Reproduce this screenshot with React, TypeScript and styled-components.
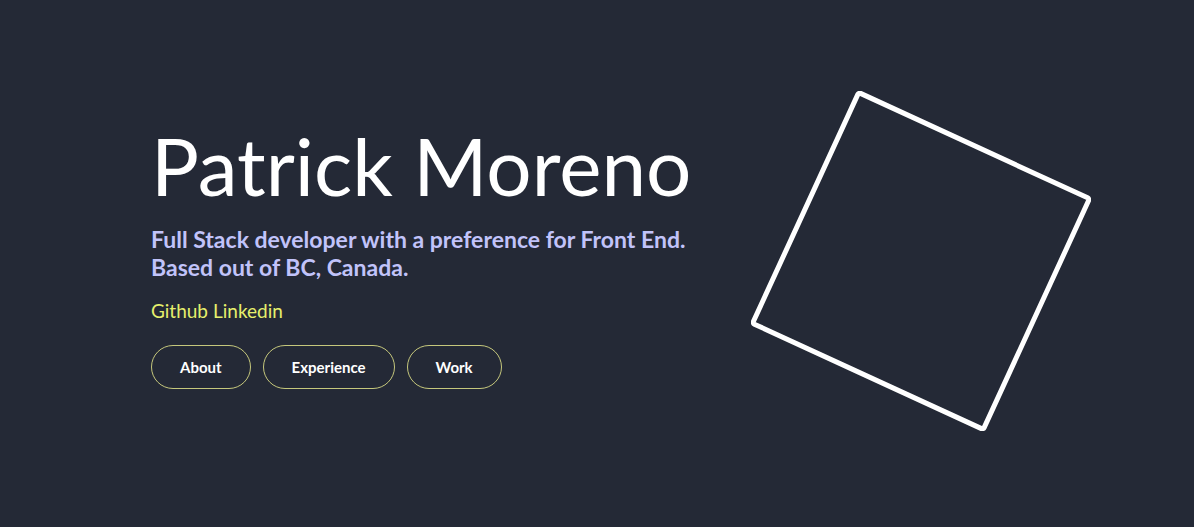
import React from "react";
import styled, { createGlobalStyle } from "styled-components";

const Global = createGlobalStyle`
  html, body { margin: 0; padding: 0; background: #242936; }
  body { font-family: Lato, "Noto Sans", sans-serif; }
`;

const Page = styled.main`
  min-height: 527px;
  background: #242936;
  display: flex;
  align-items: center;
  justify-content: space-between;
  padding: 0 103px 0 151px;
  box-sizing: border-box;
`;

const Intro = styled.section`
  display: flex;
  flex-direction: column;
  margin-bottom: 14px;
`;

const Name = styled.h1`
  margin: 0;
  font-family: Lato, sans-serif;
  font-weight: 400;
  font-size: 80px;
  line-height: 1;
  color: #ffffff;
  letter-spacing: 0;
`;

const Tagline = styled.p`
  margin: 20px 0 0;
  font-family: Lato, sans-serif;
  font-weight: 700;
  font-size: 23px;
  line-height: 28px;
  color: #c1c3fa;
`;

const Links = styled.div`
  display: flex;
  gap: 5px;
  margin-top: 18px;
`;

const LinkText = styled.a`
  font-family: Lato, sans-serif;
  font-size: 19px;
  line-height: 24px;
  color: #e6f06c;
  text-decoration: none;
`;

const Nav = styled.nav`
  display: flex;
  gap: 12px;
  margin-top: 22px;
`;

const NavButton = styled.button`
  height: 44px;
  padding: 0 28px;
  border: 1px solid #c5c77c;
  border-radius: 22px;
  background: transparent;
  color: #ffffff;
  font-family: Lato, sans-serif;
  font-weight: 700;
  font-size: 15px;
  cursor: pointer;
`;

const Shape = styled.svg`
  width: 340px;
  height: 340px;
  flex: none;
  margin-bottom: 6px;
`;

export default function App() {
  return (
    <>
      <Global />
      <Page>
        <Intro>
          <Name>Patrick Moreno</Name>
          <Tagline>
            Full Stack developer with a preference for Front End.
            <br />
            Based out of BC, Canada.
          </Tagline>
          <Links>
            <LinkText href="#">Github</LinkText>
            <LinkText href="#">Linkedin</LinkText>
          </Links>
          <Nav>
            <NavButton>About</NavButton>
            <NavButton>Experience</NavButton>
            <NavButton>Work</NavButton>
          </Nav>
        </Intro>
        <Shape viewBox="0 0 340 340">
          <rect
            x={43}
            y={43}
            width={254}
            height={254}
            rx={2}
            fill="none"
            stroke="#ffffff"
            strokeWidth={5}
            strokeLinejoin="round"
            transform="rotate(24.7 170 170)"
          />
        </Shape>
      </Page>
    </>
  );
}
